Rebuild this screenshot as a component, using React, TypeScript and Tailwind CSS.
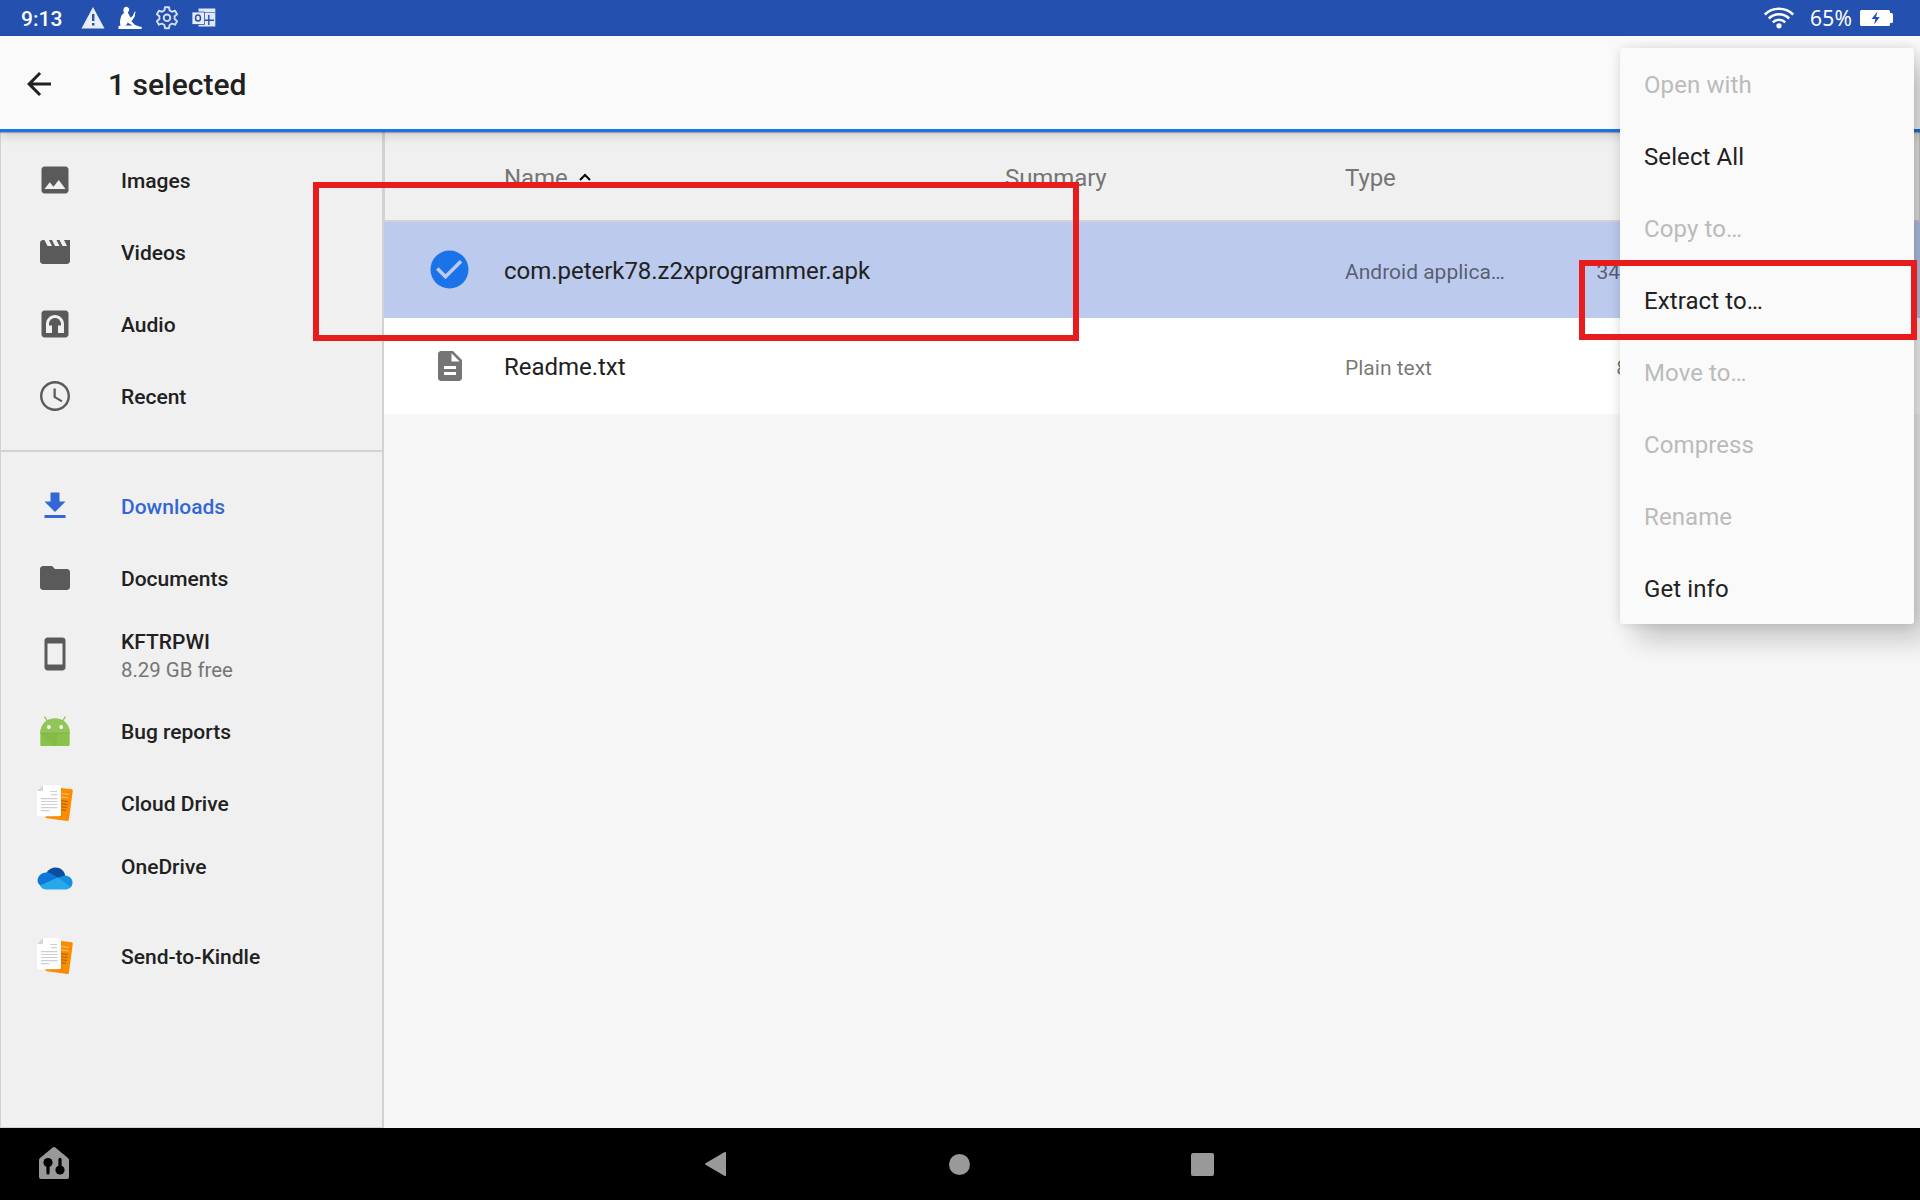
import type { ReactNode } from "react";

type IconProps = { d: string; size?: number; className?: string };

function Glyph({ d, size = 36, className = "" }: IconProps) {
  return (
    <svg viewBox="0 0 24 24" width={size} height={size} fill="currentColor" className={className}>
      <path fillRule="evenodd" d={d} />
    </svg>
  );
}

const paths = {
  image:
    "M21 19V5c0-1.100-.9-2-2-2H5c-1.100 0-2 .9-2 2v14c0 1.100.9 2 2 2h14c1.100 0 2-.9 2-2zM8.500 13.500l2.500 3.010L14.500 12l4.500 6H5z",
  movie:
    "M18 4l2 4h-3l-2-4h-2l2 4h-3l-2-4H8l2 4H7L5 4H4c-1.100 0-1.990.9-1.990 2L2 18c0 1.100.9 2 2 2h16c1.100 0 2-.9 2-2V4h-4z",
  audio:
    "M5 3h14c1.100 0 2 .9 2 2v14c0 1.100-.9 2-2 2H5c-1.100 0-2-.9-2-2V5c0-1.100.9-2 2-2zM12 6c-3.300 0-6 2.700-6 6v6h4v-5H8v-1c0-2.210 1.790-4 4-4s4 1.790 4 4v1h-2v5h4v-6c0-3.300-2.700-6-6-6z",
  clock:
    "M11.990 2C6.470 2 2 6.480 2 12s4.470 10 9.990 10C17.520 22 22 17.520 22 12S17.520 2 11.990 2zM12 20.400c-4.640 0-8.400-3.760-8.400-8.400S7.360 3.600 12 3.600s8.400 3.760 8.400 8.400-3.760 8.400-8.400 8.400zM12.500 7H11v6l5.250 3.150.75-1.230-4.500-2.670z",
  download: "M19 9h-4V3H9v6H5l7 7 7-7zM5 18v2h14v-2H5z",
  folder: "M10 4H4c-1.100 0-1.990.9-1.990 2L2 18c0 1.100.9 2 2 2h16c1.100 0 2-.9 2-2V8c0-1.100-.9-2-2-2h-8l-2-2z",
  phone:
    "M17 1.010L7 1c-1.100 0-2 .9-2 2v18c0 1.100.9 2 2 2h10c1.100 0 2-.9 2-2V3c0-1.100-.9-1.990-2-1.990zM17 19H7V5h10v14z",
  file: "M14 2H6c-1.100 0-1.990.9-1.990 2L4 20c0 1.100.89 2 1.990 2H18c1.100 0 2-.9 2-2V8l-6-6zM16 18H8v-2h8v2zM16 14H8v-2h8v2zM13 9V3.500L18.500 9H13z",
  back: "M20 11H7.830l5.590-5.590L12 4l-8 8 8 8 1.410-1.410L7.830 13H20v-2z",
};

function AndroidIcon() {
  return (
    <svg viewBox="0 0 36 36" width="36" height="36">
      <path d="M7.500 3.500L11 9M28.500 3.500L25 9" stroke="#8fbf55" strokeWidth="1.300" />
      <path d="M3.300 20C3.300 11.500 9.500 5.500 18 5.500S32.700 11.500 32.700 20v11.500a1.500 1.500 0 0 1-1.500 1.500H4.800a1.500 1.500 0 0 1-1.500-1.500z" fill="#8bc34a" />
      <path d="M3.300 20C3.300 11.500 9.500 5.500 18 5.500S32.700 11.500 32.700 20z" fill="#93c658" />
      <path d="M3.500 20.500H21L19 33H16z" fill="#84b84a" opacity=".7" />
      <path d="M3.300 20.200h29.400" stroke="#7cae43" strokeWidth=".8" />
      <circle cx="11.900" cy="14" r="1.900" fill="#fff" />
      <circle cx="24.200" cy="14" r="1.900" fill="#fff" />
    </svg>
  );
}

function DocsIcon() {
  return (
    <svg viewBox="0 0 36 36" width="36" height="36">
      <path d="M12 1.500L34.800 4.300q1.200.2 1 1.400L31.800 35q-.3 1-1.500.9L8.500 33z" fill="#fb8c00" />
      <path d="M24 8.500l8 1M24 12l7.600.9" stroke="#fcc27a" strokeWidth="1" />
      <path d="M24 15.700l6.800.8M24 18.700l6.500.8M24 21.700l6 .8M24 24.700l5 .7" stroke="#a85d00" strokeWidth="1" />
      <path d="M24.600 4v28H9l15-1z" fill="#e57c00" />
      <path d="M6 0h16.500Q24 0 24 1.500v28.300q0 1.500-1.500 1.500h-21Q0 31.300 0 29.800V6z" fill="#fff" />
      <path d="M6 0v6H0z" fill="#d6d6d6" />
      <path d="M13 6.500h7M14 9.600h6M4 13.600h16.500M4 16.500h16.500M4 19.500h16.500M4 22.600h16.500M4 25.600h8.500" stroke="#cfcfcf" strokeWidth="1.200" />
    </svg>
  );
}

function OneDriveIcon() {
  return (
    <svg viewBox="0 0 36 36" width="36" height="36">
      <path d="M9.500 11.500C12 8 15 6.600 18.500 6.600c5 0 8.700 3.200 9.800 7.900L21 18z" fill="#0a4ea2" />
      <path d="M21 16.500l7.200-2.100c4 .2 7.300 3.200 7.300 7 0 2.200-.8 3.800-2.200 5.100L19 17.500z" fill="#1490df" />
      <path d="M9 11.500c2.200-.2 4.300.4 6 1.500l6.500 3.700L3.500 24.800C1.500 23.500.6 21.500.6 19.600c0-4.300 3.500-7.700 8.400-8.100z" fill="#1076d8" />
      <path d="M3 24.500l18.300-8 12.500 9.600c-1.200 1.600-3 2.500-5.200 2.500H9.500c-3 0-5.300-1.600-6.500-4.100z" fill="#28a8ea" />
    </svg>
  );
}

type Root = { label: string; note?: string; icon: ReactNode; tall?: boolean; active?: boolean };

const mediaRoots: Root[] = [
  { label: "Images", icon: <Glyph d={paths.image} /> },
  { label: "Videos", icon: <Glyph d={paths.movie} /> },
  { label: "Audio", icon: <Glyph d={paths.audio} /> },
  { label: "Recent", icon: <Glyph d={paths.clock} /> },
];

const storageRoots: Root[] = [
  { label: "Downloads", icon: <Glyph d={paths.download} />, active: true },
  { label: "Documents", icon: <Glyph d={paths.folder} /> },
  { label: "KFTRPWI", note: "8.29 GB free", tall: true, icon: <Glyph d={paths.phone} /> },
  { label: "Bug reports", icon: <AndroidIcon /> },
  { label: "Cloud Drive", icon: <DocsIcon /> },
  { label: "OneDrive", note: "", tall: true, icon: <OneDriveIcon /> },
  { label: "Send-to-Kindle", icon: <DocsIcon /> },
];

function RootRow({ root }: { root: Root }) {
  return (
    <li className={`flex items-center pl-[37px] ${root.tall ? "h-[81px]" : "h-[72px]"} ${root.active ? "text-[#3367d6]" : "text-[#5a5a5a]"}`}>
      <span className={`w-[84px] shrink-0 ${root.tall ? "pb-px" : ""}`}>{root.icon}</span>
      <span className={`flex flex-col ${root.tall ? "pt-[3px]" : "pt-px"}`}>
        <span className={`text-[21px] leading-7 font-medium ${root.active ? "" : "text-[#212121]"}`}>{root.label}</span>
        {root.tall && <span className="h-7 text-[20.4px] leading-7 text-[#757575]">{root.note}</span>}
      </span>
    </li>
  );
}

const menu = [
  { label: "Open with", enabled: false },
  { label: "Select All", enabled: true },
  { label: "Copy to…", enabled: false },
  { label: "Extract to…", enabled: true },
  { label: "Move to…", enabled: false },
  { label: "Compress", enabled: false },
  { label: "Rename", enabled: false },
  { label: "Get info", enabled: true },
];

function StatusBar() {
  return (
    <header className="flex h-9 shrink-0 items-center bg-[#2450b0] pr-[27px] pl-[21px] text-white">
      <span className="w-[60px] pt-px text-[21px] leading-9 font-medium">9:13</span>
      <svg viewBox="0 0 24 24" width="24" height="24" className="mr-[13px]">
        <path d="M12 1L23.500 22.500H.5z" fill="#e9edf8" />
        <path d="M11 8h2.400v7H11zM11 17h2.400v2.500H11z" fill="#2450b0" />
      </svg>
      <svg viewBox="0 0 24 24" width="24" height="24" fill="#fff" className="mr-[13px]">
        <path d="M8.300.8a2.900 2.900 0 0 1 2.400 4.500l-.9 1.200 2.800 5.300L15.800 9l.5-2.700.9 2.300.4-1.600-1.200 4.300-3 3.900 3.600 3.700 4.500 1.600.6.300h1.600c.4 2-.4 2.200-1.400 2.200H.5v-3l2-.2c-.8-3-.7-6 .6-9.400.8-2 2-2.800 3-3.400C4.500 4.500 5.600.8 8.300.8zM9.500 16.500c0 1.500-1 2.500-2.500 3h7.500z" fillRule="evenodd" />
        <path d="M16.800 5.600l.9.400-3.500 8.200-1-.5z" />
      </svg>
      <svg viewBox="0 0 24 24" width="24" height="24" fill="none" stroke="#d5def2" strokeWidth="1.900" strokeLinejoin="round" className="mr-[13px]">
        <path d="M10 1.200h4l.6 3.200 2.400 1.400 3.100-1.100 2 3.500-2.500 2.100v2.800l2.500 2.100-2 3.500-3.100-1.100-2.400 1.400-.6 3.200h-4l-.6-3.200L7 17.600l-3.100 1.100-2-3.500 2.500-2.100v-2.800L1.900 8.200l2-3.500L7 5.800l2.400-1.400z" />
        <circle cx="12" cy="11.800" r="3.300" />
      </svg>
      <svg viewBox="0 0 24 24" width="24" height="24">
        <path d="M6.500 2.500h16.800v18H6.500z" fill="#e0e7f5" />
        <path d="M13 6.500h10.300" stroke="#6f8dce" strokeWidth="1" />
        <path d="M16.800 9v10M13 14.200h9" stroke="#2450b0" strokeWidth="1.400" />
        <path d="M0 6h12.500v12.500H0z" fill="#e9edf8" stroke="#2450b0" strokeWidth=".8" />
        <ellipse cx="6" cy="12" rx="2.500" ry="3.100" fill="none" stroke="#2450b0" strokeWidth="1.500" />
      </svg>
      <div className="ml-auto flex items-center">
        <svg viewBox="0 0 30 22" width="30" height="22" fill="none" stroke="#fff" strokeWidth="2.500" className="mr-4">
          <path d="M.8 7.500C8.500-.2 21.500-.2 29.200 7.500M4.800 11.500c5.700-5.600 14.700-5.600 20.400 0M8.800 15.400c3.500-3.400 8.900-3.400 12.400 0" />
          <circle cx="15" cy="18.800" r="1.400" />
        </svg>
        <span className="w-[50px] font-['Noto_Sans'] text-[21px] leading-9 tracking-[0.3px]">65%</span>
        <svg viewBox="0 0 33 16" width="33" height="16">
          <path d="M1.500 0h27Q30 0 30 1.500V3h1.500Q33 3 33 4.500v7q0 1.500-1.500 1.500H30v1.500q0 1.500-1.500 1.500h-27Q0 16 0 14.500v-13Q0 0 1.500 0z" fill="#fff" />
          <path d="M17.500 1.500L11.500 9h3.700l-1 5.500L19.700 7H16z" fill="#2450b0" />
        </svg>
      </div>
    </header>
  );
}

function FileRow({ name, type, size, icon, selected }: { name: string; type: string; size: ReactNode; icon: ReactNode; selected?: boolean }) {
  return (
    <div className={`flex h-24 items-center ${selected ? "bg-[#bbcaed]" : "bg-white"}`}>
      <span className="flex w-[120px] shrink-0 justify-start pl-[45px]">{icon}</span>
      <span className="w-[841px] shrink-0 pt-[2px] text-[24px] tracking-[-0.03px] text-[#212121]">{name}</span>
      <span className="w-[230px] shrink-0 pt-[5px] text-[21px] text-black/55">{type}</span>
      <span className="w-[45px] shrink-0 pt-[5px] text-right text-[21px] text-black/55">{size}</span>
    </div>
  );
}

export default function App() {
  return (
    <div className="relative flex h-[1200px] w-[1920px] flex-col overflow-hidden bg-[#f7f7f7] font-[Roboto,sans-serif]">
      <StatusBar />
      <div className="z-10 flex h-24 shrink-0 items-center border-b-3 border-[#1a73e8] bg-[#fafafa] pt-[3px] pl-[21px] text-[#212121] shadow-[0_1px_1px_rgba(0,0,0,0.25),0_4px_10px_rgba(0,0,0,0.14)]">
        <Glyph d={paths.back} />
        <h1 className="ml-[51px] text-[30px] font-medium">1 selected</h1>
      </div>

      <div className="flex min-h-0 flex-1">
        <nav className="w-96 shrink-0 border-r-2 border-b border-l border-[#d2d2d2] bg-[#f0f0f0] pt-3">
          <ul className="-ml-px pb-[18px]">
            {mediaRoots.map((r) => (
              <RootRow key={r.label} root={r} />
            ))}
          </ul>
          <ul className="-ml-px border-t-2 border-[#d2d2d2] pt-[18px]">
            {storageRoots.map((r) => (
              <RootRow key={r.label} root={r} />
            ))}
          </ul>
        </nav>
        <main className="flex-1">
          <div className="flex h-[90px] items-center border-x border-b-2 border-[#d2d2d2] bg-[#f0f0f0] pl-[119px] text-[24px] tracking-[-0.1px] text-[#757575]">
            <span className="flex w-[501px] items-center gap-3 pt-1">
              Name
              <svg viewBox="0 0 12 8" width="12" height="8" fill="none" stroke="#000" strokeWidth="2" className="-ml-px -mt-[3px]">
                <path d="M1 7l5-5 5 5" />
              </svg>
            </span>
            <span className="w-[340px] pt-1">Summary</span>
            <span className="pt-1">Type</span>
          </div>
          <FileRow
            selected
            name="com.peterk78.z2xprogrammer.apk"
            type="Android applica…"
            size="34"
            icon={
              <svg viewBox="0 0 40 40" width="40" height="40">
                <circle cx="20.500" cy="19.500" r="19" fill="#1a73e8" />
                <path d="M8.300 18.500l8.200 8.200 15.500-15.500" fill="none" stroke="#bbcaed" strokeWidth="3.700" />
              </svg>
            }
          />
          <FileRow
            name="Readme.txt"
            type="Plain text"
            size={<span className="-mr-2">8</span>}
            icon={<Glyph d={paths.file} className="ml-[3px] text-[#757575]" />}
          />
        </main>
      </div>

      <footer className="flex h-[72px] shrink-0 items-center bg-black text-[#999]">
        <svg viewBox="0 0 30 32" width="30" height="32" className="-mt-[2px] ml-[39px]">
          <path d="M13.700.5q1.300-1 2.600 0L29 11q1 .8 1 2v17q0 2-2 2H2q-2 0-2-2V13q0-1.200 1-2z" fill="currentColor" />
          <circle cx="9" cy="15.500" r="4.600" fill="#000" />
          <circle cx="21" cy="23" r="4.600" fill="#000" />
          <path d="M9 15v11M21 12.300V24" stroke="#000" strokeWidth="3.200" strokeLinecap="round" />
        </svg>
        <svg viewBox="0 0 21 24" width="21" height="24" fill="currentColor" className="ml-[636px]">
          <path d="M19.200.3Q21-.5 21 1v22q0 1.500-1.800.7L.6 12.800q-1.200-.8 0-1.600z" />
        </svg>
        <span className="mt-[1px] ml-[223px] size-[21px] rounded-full bg-[#999]" />
        <span className="ml-[221px] size-[23px] rounded-[2px] bg-[#999]" />
      </footer>

      <ul className="absolute top-12 left-[1620px] z-20 w-[294px] rounded-[3px] bg-[#fafafa] shadow-[0_0_12px_rgba(0,0,0,0.12),16px_16px_28px_rgba(0,0,0,0.2)]">
        {menu.map((m) => (
          <li key={m.label} className={`flex h-[72px] items-center pt-[2px] pl-6 text-[24px] tracking-[0.1px] ${m.enabled ? "text-[#212121]" : "text-[#bbb]"}`}>
            {m.label}
          </li>
        ))}
      </ul>

      <div className="absolute top-[182px] left-[313px] z-30 h-[159px] w-[766px] border-6 border-[#e71c1c]" />
      <div className="absolute top-[260px] left-[1579px] z-30 h-[80px] w-[338px] border-6 border-[#e71c1c]" />
    </div>
  );
}
